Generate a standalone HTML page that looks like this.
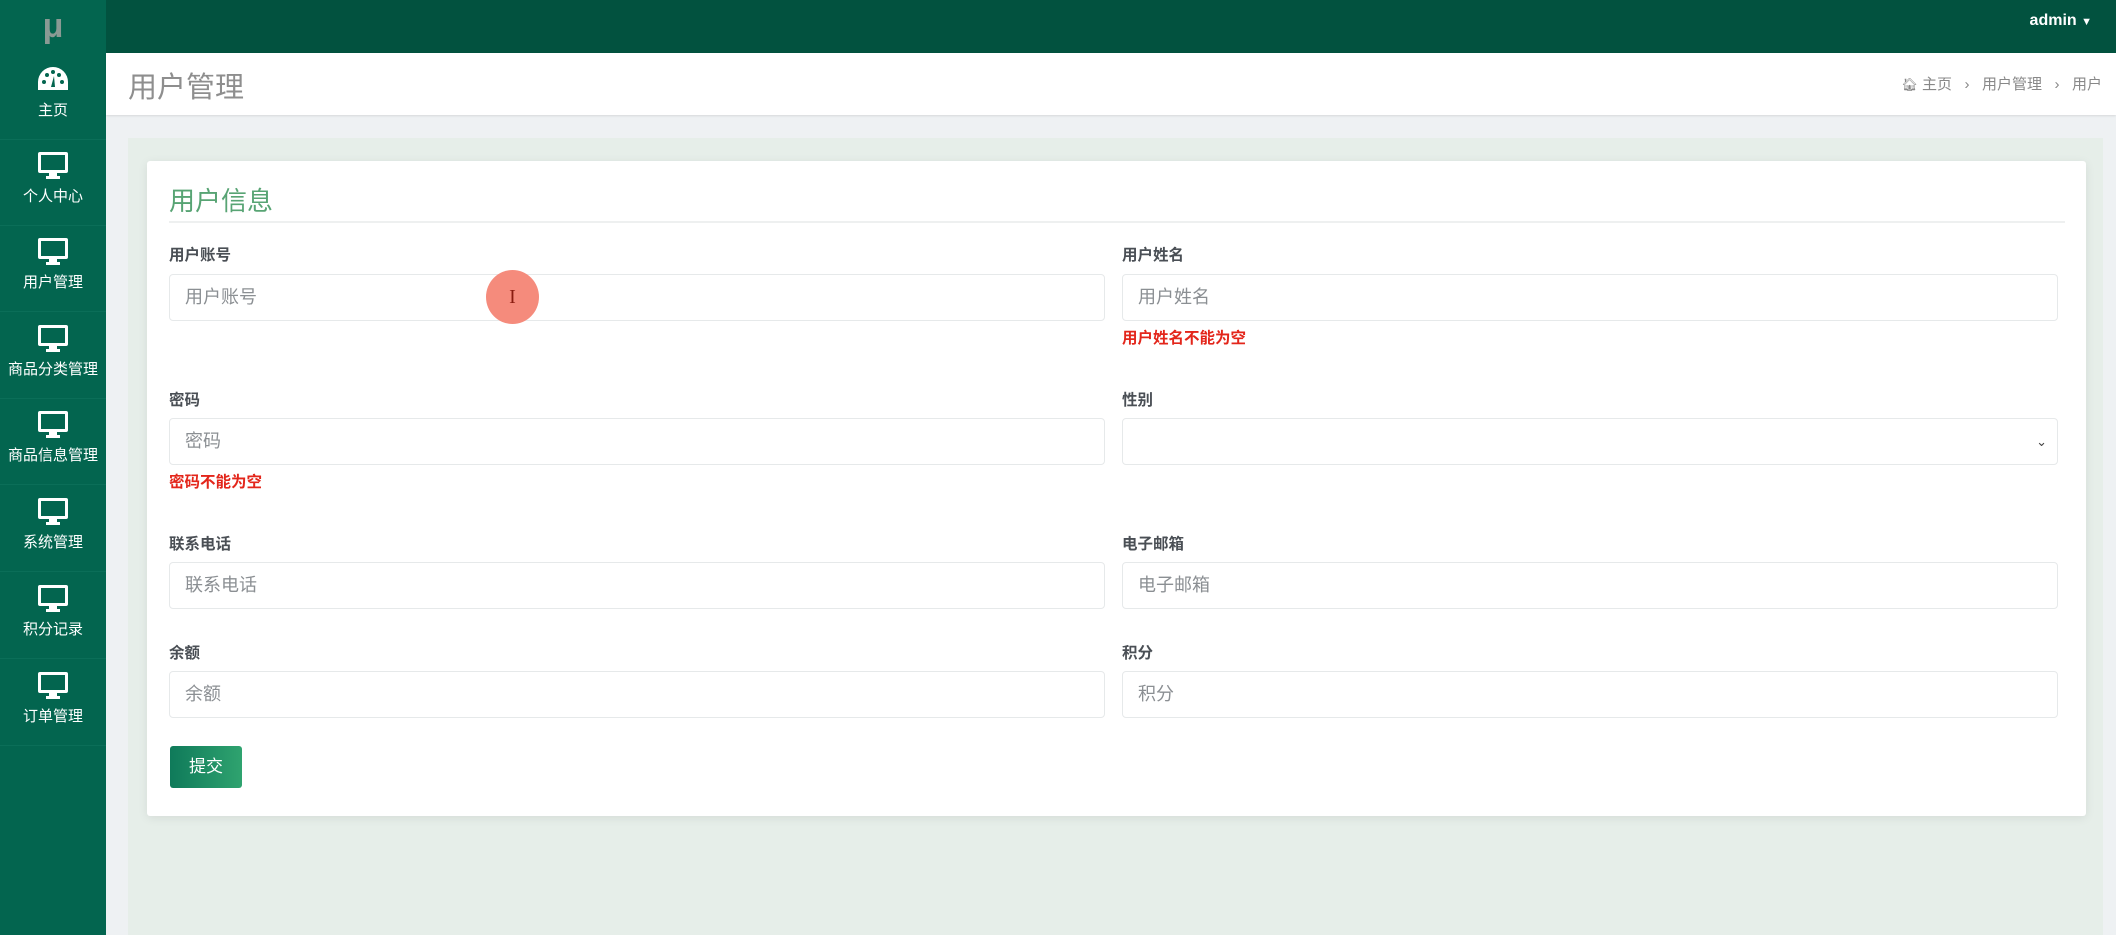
<!DOCTYPE html>
<html><head><meta charset="utf-8"><style>
*{box-sizing:border-box;margin:0;padding:0}
body{width:2116px;height:935px;overflow:hidden;background:#eef1f3;font-family:"Liberation Sans","Noto Sans CJK SC",sans-serif;position:relative}
.side{position:absolute;left:0;top:0;width:106px;height:935px;background:#03654f}
.logo{position:absolute;left:0;top:0;width:106px;height:53px;color:#8a9a94;font-size:34px;font-weight:bold;text-align:center;line-height:53px}
.item{position:absolute;left:0;width:106px;height:87px;border-bottom:1px solid #0b6e58;color:#fff;text-align:center}
.item svg{position:absolute;left:37px;top:12px}
.item span{position:absolute;left:0;width:106px;top:48px;font-size:15px;line-height:20px}
.top{position:absolute;left:106px;top:0;right:0;height:53px;background:#02523f}
.admin{position:absolute;right:24px;top:12px;color:#fff;font-size:16px;font-weight:bold}
.hdr{position:absolute;left:106px;top:53px;right:0;height:62px;background:#fff;box-shadow:0 1px 2px rgba(0,0,0,.1)}
.hdr h1{position:absolute;left:22px;top:11px;font-size:29px;font-weight:normal;color:#8e8e8e}
.bc{position:absolute;right:14px;top:20px;font-size:15px;color:#888}
.panel{position:absolute;left:128px;top:138px;width:1975px;height:797px;background:#e6eee9}
.card{position:absolute;left:147px;top:161px;width:1939px;height:655px;background:#fff;border-radius:3px;box-shadow:0 2px 10px rgba(0,0,0,.08)}
.ct{position:absolute;left:169px;top:181px;font-size:26px;color:#58a474}
.hr{position:absolute;left:169px;top:221px;width:1896px;height:2px;background:#eef0f0}
.lbl{position:absolute;font-size:15.5px;font-weight:bold;color:#4a4f55}
.inp{position:absolute;width:936px;height:47px;border:1px solid #e6e9ea;border-radius:4px;background:#fff;font-size:18px;color:#8b8f93;padding-left:15px;line-height:45px}
.err{position:absolute;font-size:15.5px;font-weight:bold;color:#e3261b}
.btn{position:absolute;left:170px;top:746px;width:72px;height:42px;border-radius:3px;background:linear-gradient(90deg,#0f7a5a,#2fa36f);color:#fff;font-size:17px;text-align:center;line-height:42px}
.cur{position:absolute;left:486px;top:270px;width:53px;height:54px;border-radius:50%;background:#f58b7c;color:#8a1c10;font-size:20px;text-align:center;line-height:54px;font-family:"Liberation Serif",serif}
</style></head><body>
<div class="side">
<div class="logo">μ</div>
<div class="item" style="top:53px"><svg width="32" height="28" viewBox="0 0 32 28"><path d="M16 2A15 15 0 0 0 1 17v8h30v-8A15 15 0 0 0 16 2z" fill="#fff"/><circle cx="7" cy="17" r="2" fill="#03654f"/><circle cx="10" cy="10" r="2" fill="#03654f"/><circle cx="16" cy="7" r="2" fill="#03654f"/><circle cx="22" cy="10" r="2" fill="#03654f"/><circle cx="25" cy="17" r="2" fill="#03654f"/><path d="M17 11l-3 11h4z" fill="#03654f"/></svg><span>主页</span></div>
<div class="item" style="top:139px"><svg width="32" height="30" viewBox="0 0 32 30"><rect x="1" y="1" width="30" height="21" rx="2" fill="#fff"/><rect x="4" y="4" width="24" height="15" fill="#03654f"/><rect x="12" y="22" width="8" height="4" fill="#fff"/><rect x="9" y="25" width="14" height="3" fill="#fff"/></svg><span>个人中心</span></div>
<div class="item" style="top:225px"><svg width="32" height="30" viewBox="0 0 32 30"><rect x="1" y="1" width="30" height="21" rx="2" fill="#fff"/><rect x="4" y="4" width="24" height="15" fill="#03654f"/><rect x="12" y="22" width="8" height="4" fill="#fff"/><rect x="9" y="25" width="14" height="3" fill="#fff"/></svg><span>用户管理</span></div>
<div class="item" style="top:312px"><svg width="32" height="30" viewBox="0 0 32 30"><rect x="1" y="1" width="30" height="21" rx="2" fill="#fff"/><rect x="4" y="4" width="24" height="15" fill="#03654f"/><rect x="12" y="22" width="8" height="4" fill="#fff"/><rect x="9" y="25" width="14" height="3" fill="#fff"/></svg><span>商品分类管理</span></div>
<div class="item" style="top:398px"><svg width="32" height="30" viewBox="0 0 32 30"><rect x="1" y="1" width="30" height="21" rx="2" fill="#fff"/><rect x="4" y="4" width="24" height="15" fill="#03654f"/><rect x="12" y="22" width="8" height="4" fill="#fff"/><rect x="9" y="25" width="14" height="3" fill="#fff"/></svg><span>商品信息管理</span></div>
<div class="item" style="top:485px"><svg width="32" height="30" viewBox="0 0 32 30"><rect x="1" y="1" width="30" height="21" rx="2" fill="#fff"/><rect x="4" y="4" width="24" height="15" fill="#03654f"/><rect x="12" y="22" width="8" height="4" fill="#fff"/><rect x="9" y="25" width="14" height="3" fill="#fff"/></svg><span>系统管理</span></div>
<div class="item" style="top:572px"><svg width="32" height="30" viewBox="0 0 32 30"><rect x="1" y="1" width="30" height="21" rx="2" fill="#fff"/><rect x="4" y="4" width="24" height="15" fill="#03654f"/><rect x="12" y="22" width="8" height="4" fill="#fff"/><rect x="9" y="25" width="14" height="3" fill="#fff"/></svg><span>积分记录</span></div>
<div class="item" style="top:659px"><svg width="32" height="30" viewBox="0 0 32 30"><rect x="1" y="1" width="30" height="21" rx="2" fill="#fff"/><rect x="4" y="4" width="24" height="15" fill="#03654f"/><rect x="12" y="22" width="8" height="4" fill="#fff"/><rect x="9" y="25" width="14" height="3" fill="#fff"/></svg><span>订单管理</span></div>
</div>
<div class="top"><div class="admin">admin <span style="font-size:11px">▼</span></div></div>
<div class="hdr"><h1>用户管理</h1><div class="bc"><span style="font-size:13px">🏠︎</span> 主页 &nbsp;&nbsp;›&nbsp;&nbsp; 用户管理 &nbsp;&nbsp;›&nbsp;&nbsp; 用户</div></div>
<div class="panel"></div>
<div class="card"></div>
<div class="ct">用户信息</div>
<div class="hr"></div>

<div class="lbl" style="left:169px;top:243px">用户账号</div>
<div class="inp" style="left:169px;top:274px">用户账号</div>
<div class="lbl" style="left:1122px;top:243px">用户姓名</div>
<div class="inp" style="left:1122px;top:274px">用户姓名</div>
<div class="err" style="left:1122px;top:326px">用户姓名不能为空</div>

<div class="lbl" style="left:169px;top:388px">密码</div>
<div class="inp" style="left:169px;top:418px">密码</div>
<div class="err" style="left:169px;top:470px">密码不能为空</div>
<div class="lbl" style="left:1122px;top:388px">性别</div>
<div class="inp" style="left:1122px;top:418px"><span style="position:absolute;right:10px;top:0;font-size:13px;color:#444">⌄</span></div>

<div class="lbl" style="left:169px;top:532px">联系电话</div>
<div class="inp" style="left:169px;top:562px">联系电话</div>
<div class="lbl" style="left:1122px;top:532px">电子邮箱</div>
<div class="inp" style="left:1122px;top:562px">电子邮箱</div>

<div class="lbl" style="left:169px;top:641px">余额</div>
<div class="inp" style="left:169px;top:671px">余额</div>
<div class="lbl" style="left:1122px;top:641px">积分</div>
<div class="inp" style="left:1122px;top:671px">积分</div>

<div class="btn">提交</div>
<div class="cur">I</div>
</body></html>
